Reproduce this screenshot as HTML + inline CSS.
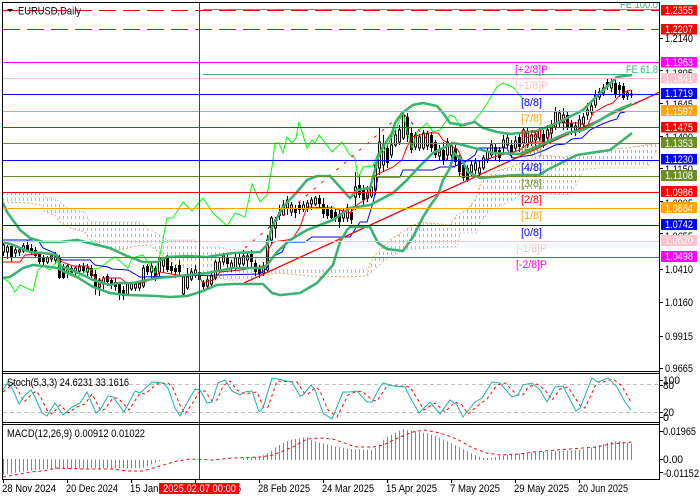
<!DOCTYPE html>
<html><head><meta charset="utf-8"><title>EURUSD,Daily</title>
<style>
html,body{margin:0;padding:0;background:#fff;width:700px;height:500px;overflow:hidden}
svg{display:block;font-family:"Liberation Sans",sans-serif}
text{font-size:11px}
.t text{fill:#fff;font-size:11px}
.m text{font-size:11px}
</style></head><body>
<svg width="700" height="500" viewBox="0 0 700 500" xmlns="http://www.w3.org/2000/svg">
<defs>
<pattern id="po" width="4" height="6" patternUnits="userSpaceOnUse"><rect x="3" y="0" width="1" height="3" fill="#f4a460"/></pattern>
<pattern id="pp" width="4" height="6" patternUnits="userSpaceOnUse"><rect x="3" y="0" width="1" height="3" fill="#c8b0c8"/></pattern>
<pattern id="hb" width="4" height="10" patternUnits="userSpaceOnUse"><rect x="3" y="0" width="1" height="10" fill="#1ea7e1"/></pattern>
<clipPath id="c1"><rect x="3" y="3" width="656" height="368"/></clipPath>
<clipPath id="c2"><rect x="3" y="374" width="656" height="48"/></clipPath>
<clipPath id="c3"><rect x="3" y="425" width="656" height="54"/></clipPath>
</defs>
<rect width="700" height="500" fill="#fff"/>
<g clip-path="url(#c1)">
<!-- cloud -->
<polygon fill="url(#pp)" points="3,193 42,193 45,197 53,198 60,202 67,208 85,212 90,222 142,222 147,229 155,232 167,240 195,240 203,247 220,247 230,250 245,250 262,262 270,270 345,270 367,269 367,276 345,277 310,276 280,273 262,275 250,280 230,280 200,275 190,270 170,262 150,245 135,246 125,249 110,250 90,240 85,232 70,228 60,222 55,215 45,212 40,205 30,203 3,202"/>
<polygon fill="url(#po)" points="367,276 370,263 375,255 390,240 410,227 420,222 450,225 457,215 467,210 475,200 482,180 493,172 510,167 540,155 563,157 607,150 633,147 657,143 657,150 647,168 600,168 583,170 580,178 570,195 522,193 513,200 490,210 480,223 477,233 460,233 457,247 430,248 403,250 385,260"/>
<polyline fill="none" stroke="#f4a460" stroke-dasharray="2 2" points="3,202 30,203 40,205 45,212 55,215 60,222 70,228 85,232 90,240 110,250 125,249 135,246 150,245 170,262 190,270 200,275 230,280 250,280 262,275 280,273 310,276 345,277 367,276 370,263 375,255 390,240 410,227 420,222 450,225 457,215 467,210 475,200 482,180 493,172 510,167 540,155 563,157 607,150 633,147 657,143"/>
<polyline fill="none" stroke="#d8bfd8" stroke-dasharray="2 2" points="3,193 42,193 45,197 53,198 60,202 67,208 85,212 90,222 142,222 147,229 155,232 167,240 195,240 203,247 220,247 230,250 245,250 262,262 270,270 345,270 367,269 367,276 385,260 403,250 430,248 457,247 460,233 477,233 480,223 490,210 513,200 522,193 570,195 580,178 583,170 600,168 647,168 657,150"/>
<!-- wicks -->
<path fill="none" stroke="#000" stroke-width="1" d="M3.5 243V256M7.5 245V259M11.5 244V262M15.5 247V258M19.5 248V256M23.5 243V253M27.5 240V252M31.5 244V254M35.5 247V258M39.5 252V264M43.5 255V266M47.5 256V264M51.5 253V262M55.5 252V264M59.5 255V279M63.5 264V279M67.5 264V278M71.5 266V275M75.5 266V276M79.5 264V274M83.5 263V273M87.5 264V276M91.5 265V280M95.5 270V295M99.5 278V296M103.5 276V290M107.5 274V286M111.5 278V289M115.5 278V291M119.5 282V300M123.5 286V300M127.5 283V296M131.5 283V291M135.5 282V291M139.5 282V291M143.5 265V288M147.5 264V275M151.5 262V280M155.5 266V281M159.5 256V276M163.5 257V272M167.5 255V272M171.5 262V274M175.5 265V278M179.5 260V277M183.5 275V296M187.5 268V290M191.5 268V281M195.5 265V278M199.5 268V282M203.5 280V290M207.5 276V288M211.5 272V286M215.5 260V280M219.5 258V273M223.5 253V265M227.5 255V268M231.5 260V272M235.5 254V270M239.5 252V268M243.5 250V266M247.5 252V268M251.5 250V268M255.5 260V276M259.5 265V278M263.5 262V276M267.5 235V272M271.5 216V244M275.5 217V238M279.5 205V220M283.5 200V216M287.5 196V215M291.5 202V216M295.5 205V218M299.5 202V214M303.5 201V212M307.5 200V212M311.5 197V210M315.5 196V206M319.5 195V207M323.5 198V218M327.5 205V219M331.5 206V222M335.5 208V222M339.5 210V228M343.5 208V222M347.5 204V222M351.5 208V224M355.5 172V210M359.5 175V198M363.5 185V205M367.5 186V202M371.5 184V198M375.5 163V195M379.5 128V175M383.5 135V172M387.5 144V168M391.5 135V158M395.5 130V147M399.5 125V145M403.5 112V140M407.5 113V142M411.5 128V153M415.5 132V150M419.5 134V151M423.5 130V150M427.5 131V150M431.5 132V152M435.5 140V158M439.5 145V160M443.5 142V165M447.5 138V160M451.5 142V160M455.5 145V166M459.5 155V176M463.5 160V181M467.5 165V182M471.5 160V176M475.5 158V174M479.5 160V176M483.5 155V170M487.5 148V163M491.5 140V158M495.5 143V160M499.5 147V162M503.5 135V155M507.5 133V148M511.5 140V158M515.5 136V151M519.5 133V152M523.5 127V148M527.5 128V148M531.5 130V146M535.5 130V148M539.5 127V141M543.5 130V148M547.5 125V142M551.5 120V142M555.5 107V130M559.5 110V127M563.5 108V130M567.5 112V130M571.5 120V135M575.5 122V136M579.5 115V133M583.5 113V130M587.5 103V120M591.5 100V115M595.5 90V108M599.5 88V100M603.5 84V96M607.5 78V90M611.5 79V92M615.5 80V98M619.5 82V97M623.5 83V100M627.5 90V100M631.5 90V98"/>
<!-- bear bodies -->
<path fill="none" stroke="#000" stroke-width="3" d="M11.5 246V258M27.5 245V250M31.5 248V251M35.5 250V256M39.5 254V262M43.5 258V262M59.5 258V278M63.5 268V278M71.5 268V273M83.5 266V271M91.5 268V276M95.5 274V288M107.5 276V282M111.5 280V285M115.5 282V287M119.5 284V294M123.5 290V296M147.5 266V272M155.5 268V278M167.5 258V270M171.5 266V271M175.5 268V272M179.5 265V272M199.5 272V280M203.5 282V287M227.5 258V264M251.5 254V262M255.5 263V272M259.5 268V274M279.5 212V216M295.5 208V213M299.5 205V210M319.5 198V204M323.5 204V214M327.5 208V216M331.5 210V218M335.5 212V218M339.5 214V222M351.5 212V220M359.5 185V195M363.5 190V200M387.5 148V163M407.5 117V135M411.5 133V150M431.5 135V148M435.5 142V155M443.5 150V160M455.5 148V162M459.5 158V172M463.5 165V178M467.5 168V180M495.5 147V152M499.5 150V158M511.5 145V155M519.5 137V147M543.5 134V146M567.5 115V128M571.5 123V128M607.5 82V86M615.5 83V94M619.5 85V90M623.5 86V98"/>
<!-- bull bodies -->
<path fill="#fff" stroke="#000" stroke-width="1" d="M2.5 245h2v7h-2zM6.5 247h2v5h-2zM14.5 250h2v3h-2zM18.5 250h2v2h-2zM22.5 246h2v5h-2zM46.5 258h2v4h-2zM50.5 256h2v3h-2zM54.5 257h2v3h-2zM66.5 266h2v6h-2zM74.5 268h2v4h-2zM78.5 267h2v4h-2zM86.5 268h2v4h-2zM98.5 280h2v7h-2zM102.5 278h2v6h-2zM126.5 284h2v10h-2zM130.5 284h2v5h-2zM134.5 284h2v4h-2zM138.5 284h2v4h-2zM142.5 268h2v18h-2zM150.5 266h2v6h-2zM158.5 258h2v14h-2zM162.5 260h2v6h-2zM182.5 277h2v17h-2zM186.5 277h2v11h-2zM190.5 272h2v7h-2zM194.5 270h2v5h-2zM206.5 280h2v6h-2zM210.5 276h2v8h-2zM214.5 262h2v16h-2zM218.5 262h2v8h-2zM222.5 256h2v6h-2zM230.5 263h2v5h-2zM234.5 258h2v10h-2zM238.5 258h2v6h-2zM242.5 256h2v8h-2zM246.5 256h2v4h-2zM262.5 266h2v7h-2zM266.5 240h2v30h-2zM270.5 218h2v22h-2zM274.5 220h2v8h-2zM282.5 205h2v10h-2zM286.5 200h2v8h-2zM290.5 205h2v7h-2zM302.5 205h2v4h-2zM306.5 203h2v5h-2zM310.5 200h2v4h-2zM314.5 198h2v6h-2zM342.5 212h2v6h-2zM346.5 208h2v10h-2zM354.5 187h2v10h-2zM366.5 193h2v5h-2zM370.5 187h2v9h-2zM374.5 165h2v25h-2zM378.5 142h2v26h-2zM382.5 145h2v20h-2zM390.5 145h2v10h-2zM394.5 135h2v10h-2zM398.5 130h2v12h-2zM402.5 115h2v23h-2zM414.5 135h2v12h-2zM418.5 137h2v11h-2zM422.5 133h2v15h-2zM426.5 134h2v12h-2zM438.5 150h2v6h-2zM446.5 142h2v13h-2zM450.5 146h2v9h-2zM470.5 165h2v7h-2zM474.5 163h2v7h-2zM478.5 168h2v5h-2zM482.5 158h2v10h-2zM486.5 152h2v8h-2zM490.5 145h2v10h-2zM502.5 140h2v7h-2zM506.5 138h2v7h-2zM514.5 141h2v7h-2zM522.5 130h2v13h-2zM526.5 133h2v12h-2zM530.5 135h2v7h-2zM534.5 135h2v5h-2zM538.5 130h2v8h-2zM546.5 130h2v8h-2zM550.5 125h2v8h-2zM554.5 112h2v15h-2zM558.5 113h2v9h-2zM562.5 115h2v7h-2zM574.5 126h2v4h-2zM578.5 120h2v8h-2zM582.5 117h2v7h-2zM586.5 110h2v5h-2zM590.5 106h2v6h-2zM594.5 95h2v10h-2zM598.5 92h2v5h-2zM602.5 88h2v5h-2zM610.5 82h2v6h-2zM626.5 93h2v3h-2zM630.5 94h2v1h-2z"/>
<!-- green chikou -->
<polyline fill="none" stroke="#00ff00" stroke-width="1" points="3,278 10,283 15,292 20,285 33,291 38,270 43,266 50,270 58,260 63,267 77,277 88,270 100,268 110,260 115,257 128,268 132,258 143,255 155,273 160,255 167,218 173,218 183,202 192,211 203,198 213,213 227,226 235,213 245,217 252,184 260,202 267,195 272,167 275,143 279,143 283,153 287,137 292,143 296,138 299,122 307,148 312,140 315,143 319,135 332,152 342,142 350,155 355,158 358,178 363,167 373,166 378,153 383,153 393,135 403,113 408,135 412,148 417,132 427,123 433,132 440,130 450,115 455,117 460,127 473,122 483,110 497,87 503,83 513,87 522,98"/>
<!-- dashed red -->
<polyline fill="none" stroke="#ff0000" stroke-width="1" stroke-dasharray="3 7" points="245,248 340,167 403,113 412,123 440,153 463,176"/>
<!-- tenkan -->
<polyline fill="none" stroke="#ff0000" stroke-width="1" points="3,262 20,262 25,255 37,254 50,253 57,257 62,262 73,266 88,266 95,278 100,285 103,278 120,278 127,283 143,283 155,277 160,272 177,275 198,275 203,283 213,280 220,272 240,270 260,267 267,265 268,250 273,242 287,240 293,238 300,227 307,207 333,208 350,213 357,205 367,198 373,177 378,174 393,167 402,160 407,147 412,137 427,133 438,133 443,140 453,147 458,150 463,161 480,161 485,160 500,155 510,153 520,150 530,142 540,142 547,142 552,127 557,123 580,123 587,127 593,113 607,105 613,103 618,97 625,92 631,90"/>
<!-- kijun -->
<polyline fill="none" stroke="#0000ff" stroke-width="1" points="3,240 38,240 43,248 55,253 62,260 90,260 95,265 108,267 112,269 128,270 140,277 220,275 260,274 267,268 272,257 282,252 287,242 305,242 312,237 350,237 360,222 367,222 373,203 378,177 400,177 403,170 433,170 440,167 453,167 465,162 475,155 478,148 507,148 510,155 513,158 532,155 545,150 555,145 565,144 572,139 582,138 590,130 600,125 610,121 617,119 620,113 625,112"/>
<!-- trendline -->
<line x1="244" y1="283" x2="660" y2="92" stroke="#ff0000" stroke-width="1.3"/>
<!-- Bollinger -->
<g fill="none" stroke="#3cb371" stroke-width="2.6">
<polyline points="3,203 7,212 20,230 30,238 43,242 60,242 77,240 93,244 110,248 127,256 143,262 157,262 167,257 187,256 207,257 233,253 260,252 267,245 272,227 283,207 297,192 307,180 317,176 330,176 340,187 347,195 350,198 357,190 370,188 375,170 378,157 383,147 392,133 395,123 402,113 413,105 423,103 437,106 443,113 450,123 463,125 475,122 483,128 497,132 510,134 537,131 557,123 583,110 600,93 617,77 632,75"/>
<polyline points="3,242 13,245 20,248 30,252 43,253 57,255 60,267 67,268 83,275 93,280 110,285 118,283 133,283 157,278 170,277 207,273 233,268 263,268 267,265 277,252 290,240 307,230 320,225 333,220 350,208 370,205 393,193 407,180 417,169 433,153 453,143 463,145 493,153 520,154 547,142 567,133 583,130 600,120 617,110 632,104"/>
<polyline points="3,278 10,277 23,268 33,265 43,266 57,268 67,273 77,277 93,287 110,293 127,295 157,296 170,297 187,296 200,292 217,285 233,284 263,284 272,293 280,295 300,293 317,283 333,265 340,242 347,230 350,227 370,227 378,243 387,249 403,251 413,237 423,217 432,203 438,195 443,180 450,168 454,153 462,160 468,172 480,178 517,175 540,175 547,170 577,155 610,150 632,133"/>
</g>
<!-- FE lines -->
<line x1="203" y1="9.5" x2="660" y2="9.5" stroke="#3cb371" stroke-width="1"/>
<line x1="203" y1="74.5" x2="632" y2="74.5" stroke="#3cb371" stroke-width="1"/>
<!-- horizontal levels -->
<g stroke-width="1">
<line x1="3" x2="660" y1="10.5" y2="10.5" stroke="#ff0000" stroke-dasharray="17 7"/>
<line x1="3" x2="660" y1="29.5" y2="29.5" stroke="#ff0000" stroke-dasharray="17 7"/>
<line x1="3" x2="660" y1="62.5" y2="62.5" stroke="#ff00ff"/>
<line x1="3" x2="660" y1="78.5" y2="78.5" stroke="#ffc0cb"/>
<line x1="3" x2="660" y1="94.5" y2="94.5" stroke="#0000ff"/>
<line x1="3" x2="660" y1="111.5" y2="111.5" stroke="#ffa500"/>
<line x1="3" x2="660" y1="127.5" y2="127.5" stroke="#ff0000"/>
<line x1="3" x2="660" y1="143.5" y2="143.5" stroke="#6b8e23"/>
<line x1="3" x2="660" y1="160.5" y2="160.5" stroke="#0000ff"/>
<line x1="3" x2="660" y1="176.5" y2="176.5" stroke="#6b8e23"/>
<line x1="3" x2="660" y1="192.5" y2="192.5" stroke="#ff0000"/>
<line x1="3" x2="660" y1="208.5" y2="208.5" stroke="#ffa500"/>
<line x1="3" x2="660" y1="225.5" y2="225.5" stroke="#0000ff"/>
<line x1="3" x2="660" y1="241.5" y2="241.5" stroke="#ffc0cb"/>
<line x1="3" x2="660" y1="257.5" y2="257.5" stroke="#ff00ff"/>
</g>
<!-- murrey labels -->
<g class="m">
<text x="515" y="73" fill="#ff00ff" textLength="33" lengthAdjust="spacingAndGlyphs">[+2/8]P</text>
<text x="515" y="89" fill="#ffc0cb" textLength="33" lengthAdjust="spacingAndGlyphs">[+1/8]P</text>
<text x="521" y="106" fill="#0000ff" textLength="21" lengthAdjust="spacingAndGlyphs">[8/8]</text>
<text x="521" y="122" fill="#ffa500" textLength="21" lengthAdjust="spacingAndGlyphs">[7/8]</text>
<text x="521" y="138" fill="#ff0000" textLength="21" lengthAdjust="spacingAndGlyphs">[6/8]</text>
<text x="521" y="154" fill="#6b8e23" textLength="21" lengthAdjust="spacingAndGlyphs">[5/8]</text>
<text x="521" y="171" fill="#0000ff" textLength="21" lengthAdjust="spacingAndGlyphs">[4/8]</text>
<text x="521" y="187" fill="#6b8e23" textLength="21" lengthAdjust="spacingAndGlyphs">[3/8]</text>
<text x="521" y="203" fill="#ff0000" textLength="21" lengthAdjust="spacingAndGlyphs">[2/8]</text>
<text x="521" y="219" fill="#ffa500" textLength="21" lengthAdjust="spacingAndGlyphs">[1/8]</text>
<text x="521" y="236" fill="#0000ff" textLength="21" lengthAdjust="spacingAndGlyphs">[0/8]</text>
<text x="516" y="252" fill="#ffc0cb" textLength="31" lengthAdjust="spacingAndGlyphs">[-1/8]P</text>
<text x="516" y="268" fill="#ff00ff" textLength="31" lengthAdjust="spacingAndGlyphs">[-2/8]P</text>
<text x="626" y="73" fill="#3cb371" textLength="32" lengthAdjust="spacingAndGlyphs">FE 61.8</text>
<text x="620" y="8" fill="#3cb371" textLength="38" lengthAdjust="spacingAndGlyphs">FE 100.0</text>
</g>
<polygon points="7,9 13,9 10,12" fill="#000"/>
<text x="18" y="14.5" fill="#000" textLength="63" lengthAdjust="spacingAndGlyphs">EURUSD,Daily</text>
</g>
<!-- stoch -->
<line x1="3" x2="659" y1="384.5" y2="384.5" stroke="#c0c0c0" stroke-dasharray="4 3"/>
<line x1="3" x2="659" y1="412.5" y2="412.5" stroke="#c0c0c0" stroke-dasharray="4 3"/>
<g clip-path="url(#c2)" fill="none">
<polyline stroke="#ff0000" stroke-width="1" stroke-dasharray="3 3" transform="translate(5,0)" points="-2,392 3,388 8,383 13,390 19,402 25,396 31,391 35,396 42,410 47,414 55,405 63,413 72,407 80,404 87,394 96,411 100,409 108,398 113,398 124,410 135,393 140,394 152,384 163,383 168,388 175,405 180,414 187,404 195,391 200,391 207,401 212,400 218,386 225,381 232,390 240,394 245,393 252,392 259,408 263,407 272,381 292,382 300,394 303,394 311,387 315,391 323,410 332,417 343,395 350,392 357,391 367,400 372,401 380,389 383,385 393,386 405,387 410,395 419,410 430,403 440,412 450,402 457,405 463,414 475,404 482,399 492,385 500,383 512,395 518,395 523,387 532,384 540,390 547,400 555,389 563,387 576,407 580,408 592,382 598,382 608,379 617,386 626,402"/>
<polyline stroke="#20b2aa" stroke-width="1" points="3,390 8,382 13,390 19,404 25,395 31,390 35,397 42,413 47,416 55,403 63,415 72,407 80,403 87,392 96,413 100,410 108,396 113,397 124,412 135,391 140,393 152,382 163,383 168,388 175,408 180,416 187,403 195,389 200,390 207,403 212,402 218,383 225,380 232,391 240,395 245,392 252,391 259,412 263,408 272,378 292,382 300,396 303,395 311,385 315,390 323,413 332,419 343,392 350,392 357,391 367,402 372,402 380,387 383,383 393,386 405,387 410,397 419,413 430,402 440,414 450,400 457,405 463,417 475,402 482,398 492,382 500,383 512,397 518,395 523,385 532,383 540,390 547,402 555,387 563,386 576,411 580,408 592,378 598,382 608,378 617,387 625,402 631,410"/>
</g>
<!-- macd -->
<g clip-path="url(#c3)">
<polygon fill="url(#hb)" points="3,459 3,475 20,472 43,469 143,468 150,465 160,461 167,460 240,460 240,459 262,456 270,452 273,449 283,443 290,440 307,437 313,441 333,446 350,449 373,450 380,444 385,438 395,433 403,429 413,431 430,434 445,440 457,446 467,451 475,455 483,458 490,458 500,456 515,454 540,452 565,451 580,450 590,448 600,445 610,442 620,441 632,444 632,460 240,460 160,460"/>
<polyline fill="none" stroke="#ff0000" stroke-width="1" stroke-dasharray="3 3" points="3,477 20,474 30,472 43,471 57,468 83,469 113,469 127,471 143,471 160,466 177,461 190,459 213,460 233,458 260,457 273,455 293,447 307,439 320,438 333,439 350,445 357,447 373,447 383,445 400,437 413,432 425,430 440,433 457,439 473,448 487,453 500,455 520,454 533,452 557,450 583,448 597,447 610,444 632,442"/>
</g>
<!-- crosshair vertical -->
<line x1="199.5" x2="199.5" y1="3" y2="371" stroke="#e00000"/>
<line x1="199.5" x2="199.5" y1="373" y2="479" stroke="#e00000"/>
<!-- frames -->
<g fill="#000">
<rect x="2" y="2" width="658" height="1"/>
<rect x="2" y="2" width="1" height="477"/>
<rect x="659" y="2" width="1" height="477"/>
<rect x="2" y="371" width="658" height="1"/>
<rect x="2" y="373" width="658" height="1"/>
<rect x="2" y="422" width="658" height="1"/>
<rect x="2" y="424" width="658" height="1"/>
<rect x="2" y="479" width="658" height="1"/>
</g>
<text x="7" y="386" fill="#000" textLength="122" lengthAdjust="spacingAndGlyphs">Stoch(5,3,3) 24.6231 33.1616</text>
<text x="7" y="437" fill="#000" textLength="138" lengthAdjust="spacingAndGlyphs">MACD(12,26,9) 0.00912 0.01022</text>
<!-- axis ticks -->
<path stroke="#000" fill="none" d="M660 38.5h3M660 70.5h3M660 103.5h3M660 136.5h3M660 168.5h3M660 201.5h3M660 233.5h3M660 269.5h3M660 302.5h3M660 336.5h3M660 368.5h3M660 431.5h3M660 459.5h3M660 472.5h3M660 380.5h3M660 385.5h3M660 412.5h3M660 417.5h3M3.5 479v4M67.5 479v4M131.5 479v4M195.5 479v4M259.5 479v4M323.5 479v4M387.5 479v4M451.5 479v4M515.5 479v4M579.5 479v4"/>
<!-- axis labels -->
<g fill="#000">
<text x="665" y="42" textLength="28" lengthAdjust="spacingAndGlyphs">1.2140</text>
<text x="665" y="77" textLength="28" lengthAdjust="spacingAndGlyphs">1.1895</text>
<text x="665" y="108" textLength="28" lengthAdjust="spacingAndGlyphs">1.1645</text>
<text x="665" y="141" textLength="28" lengthAdjust="spacingAndGlyphs">1.1400</text>
<text x="665" y="173" textLength="28" lengthAdjust="spacingAndGlyphs">1.1150</text>
<text x="665" y="207" textLength="28" lengthAdjust="spacingAndGlyphs">1.0905</text>
<text x="665" y="240" textLength="28" lengthAdjust="spacingAndGlyphs">1.0655</text>
<text x="665" y="273" textLength="28" lengthAdjust="spacingAndGlyphs">1.0410</text>
<text x="665" y="306" textLength="28" lengthAdjust="spacingAndGlyphs">1.0160</text>
<text x="665" y="340" textLength="28" lengthAdjust="spacingAndGlyphs">0.9915</text>
<text x="665" y="372" textLength="28" lengthAdjust="spacingAndGlyphs">0.9665</text>
<text x="663" y="384" textLength="17" lengthAdjust="spacingAndGlyphs">100</text>
<text x="663" y="389" textLength="11" lengthAdjust="spacingAndGlyphs">80</text>
<text x="663" y="416" textLength="11" lengthAdjust="spacingAndGlyphs">20</text>
<text x="663" y="421" textLength="6" lengthAdjust="spacingAndGlyphs">0</text>
<text x="663" y="435" textLength="33" lengthAdjust="spacingAndGlyphs">0.01965</text>
<text x="663" y="463" textLength="20" lengthAdjust="spacingAndGlyphs">0.00</text>
<text x="663" y="477" textLength="36" lengthAdjust="spacingAndGlyphs">-0.01152</text>
</g>
<!-- price tags -->
<g class="t">
<rect x="661" y="5" width="36" height="10.5" fill="#ff0000"/><text x="665" y="14" textLength="28" lengthAdjust="spacingAndGlyphs">1.2355</text>
<rect x="661" y="24" width="36" height="10.5" fill="#ff0000"/><text x="665" y="33" textLength="28" lengthAdjust="spacingAndGlyphs">1.2207</text>
<rect x="661" y="57" width="36" height="10.5" fill="#ff00ff"/><text x="665" y="66" textLength="28" lengthAdjust="spacingAndGlyphs">1.1963</text>
<rect x="661" y="73" width="36" height="10.5" fill="#ffc0cb"/><text x="665" y="82" textLength="28" lengthAdjust="spacingAndGlyphs">1.1841</text>
<rect x="661" y="88" width="36" height="11" fill="#0000ff"/><text x="665" y="97" textLength="28" lengthAdjust="spacingAndGlyphs">1.1719</text>
<rect x="661" y="105" width="36" height="11" fill="#ffa500"/><text x="665" y="115" textLength="28" lengthAdjust="spacingAndGlyphs">1.1597</text>
<rect x="661" y="122" width="36" height="10.5" fill="#ff0000"/><text x="665" y="131" textLength="28" lengthAdjust="spacingAndGlyphs">1.1475</text>
<rect x="661" y="137" width="36" height="11" fill="#6b8e23"/><text x="665" y="147" textLength="28" lengthAdjust="spacingAndGlyphs">1.1353</text>
<rect x="661" y="154" width="36" height="10.5" fill="#0000ff"/><text x="665" y="163" textLength="28" lengthAdjust="spacingAndGlyphs">1.1230</text>
<rect x="661" y="170" width="36" height="11" fill="#6b8e23"/><text x="665" y="179" textLength="28" lengthAdjust="spacingAndGlyphs">1.1108</text>
<rect x="661" y="186" width="36" height="11" fill="#ff0000"/><text x="665" y="196" textLength="28" lengthAdjust="spacingAndGlyphs">1.0986</text>
<rect x="661" y="202" width="36" height="11" fill="#ffa500"/><text x="665" y="212" textLength="28" lengthAdjust="spacingAndGlyphs">1.0864</text>
<rect x="661" y="219" width="36" height="11" fill="#0000ff"/><text x="665" y="228" textLength="28" lengthAdjust="spacingAndGlyphs">1.0742</text>
<rect x="661" y="235" width="36" height="11" fill="#ffc0cb"/><text x="665" y="244" textLength="28" lengthAdjust="spacingAndGlyphs">1.0620</text>
<rect x="661" y="251" width="36" height="11" fill="#ff00ff"/><text x="665" y="260" textLength="28" lengthAdjust="spacingAndGlyphs">1.0498</text>
</g>
<!-- time axis -->
<g fill="#000">
<text x="2" y="492" textLength="54" lengthAdjust="spacingAndGlyphs">28 Nov 2024</text>
<text x="66" y="492" textLength="52" lengthAdjust="spacingAndGlyphs">20 Dec 2024</text>
<text x="130" y="492" textLength="52" lengthAdjust="spacingAndGlyphs">15 Jan 2025</text>
<text x="194" y="492" textLength="47" lengthAdjust="spacingAndGlyphs">6 Feb 2025</text>
<text x="258" y="492" textLength="52" lengthAdjust="spacingAndGlyphs">28 Feb 2025</text>
<text x="322" y="492" textLength="52" lengthAdjust="spacingAndGlyphs">24 Mar 2025</text>
<text x="386" y="492" textLength="51" lengthAdjust="spacingAndGlyphs">15 Apr 2025</text>
<text x="450" y="492" textLength="50" lengthAdjust="spacingAndGlyphs">7 May 2025</text>
<text x="514" y="492" textLength="55" lengthAdjust="spacingAndGlyphs">29 May 2025</text>
<text x="578" y="492" textLength="50" lengthAdjust="spacingAndGlyphs">20 Jun 2025</text>
</g>
<rect x="159" y="483" width="80" height="11" fill="#ff0000"/>
<text x="163" y="492" fill="#fff" textLength="73" lengthAdjust="spacingAndGlyphs">2025.02.07 00:00</text>
</svg>
</body></html>
